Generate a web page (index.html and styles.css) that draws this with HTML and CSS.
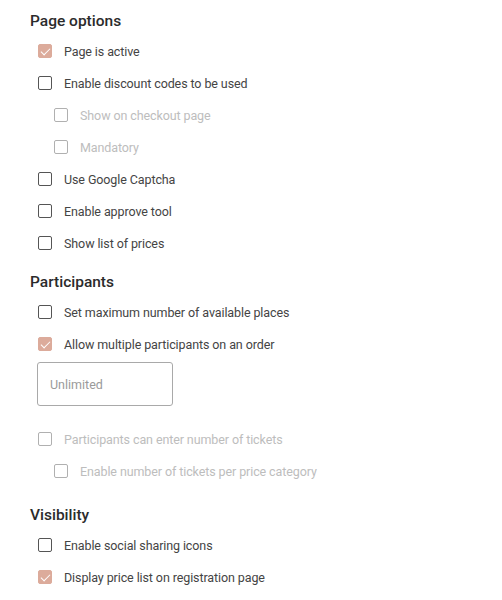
FILE: index.html
```html
<!DOCTYPE html>
<html lang="en">
<head>
<meta charset="utf-8">
<link rel="stylesheet" href="styles.css">
</head>
<body>
<div class="page">
  <section class="group">
    <h2 class="title">Page options</h2>
    <label class="row"><span class="box checked"></span><span class="text">Page is active</span></label>
    <label class="row"><span class="box"></span><span class="text">Enable discount codes to be used</span></label>
    <label class="row sub disabled"><span class="box"></span><span class="text">Show on checkout page</span></label>
    <label class="row sub disabled"><span class="box"></span><span class="text">Mandatory</span></label>
    <label class="row"><span class="box"></span><span class="text">Use Google Captcha</span></label>
    <label class="row"><span class="box"></span><span class="text">Enable approve tool</span></label>
    <label class="row"><span class="box"></span><span class="text">Show list of prices</span></label>
  </section>
  <section class="group">
    <h2 class="title">Participants</h2>
    <label class="row"><span class="box"></span><span class="text">Set maximum number of available places</span></label>
    <label class="row"><span class="box checked"></span><span class="text">Allow multiple participants on an order</span></label>
    <div class="field"><span class="placeholder">Unlimited</span></div>
    <label class="row disabled spaced"><span class="box"></span><span class="text">Participants can enter number of tickets</span></label>
    <label class="row sub disabled"><span class="box"></span><span class="text">Enable number of tickets per price category</span></label>
  </section>
  <section class="group last">
    <h2 class="title">Visibility</h2>
    <label class="row"><span class="box"></span><span class="text">Enable social sharing icons</span></label>
    <label class="row"><span class="box checked"></span><span class="text">Display price list on registration page</span></label>
  </section>
</div>
</body>
</html>
```
FILE: styles.css
```css
* { box-sizing: border-box; }
html, body { margin: 0; padding: 0; background: #ffffff; }
body {
  font-family: Roboto, "Noto Sans", "Liberation Sans", sans-serif;
  color: #444444;
}
.page {
  padding: 11px 0 0 30px;
  display: flex;
  flex-direction: column;
}
.group { display: flex; flex-direction: column; }
.group + .group { margin-top: 13px; }
.group.last { margin-top: 18px; }
.title {
  margin: 0 0 4px 0;
  font-size: 15.5px;
  line-height: 20px;
  font-weight: 500;
  color: #2b2b2b;
}
.row {
  display: flex;
  align-items: center;
  height: 32px;
  padding-left: 8px;
  font-size: 12.5px;
  letter-spacing: -0.1px;
}
.row.sub { padding-left: 24px; }
.row.spaced { margin-top: 17px; }
.box {
  width: 14px;
  height: 14px;
  border: 1px solid #555555;
  border-radius: 2px;
  margin-right: 12px;
  flex: none;
  position: relative;
  background: #fff;
}
.box.checked {
  background: #dcab9b;
  border-color: #dcab9b;
}
.box.checked::after {
  content: "";
  position: absolute;
  left: 4px;
  top: 1px;
  width: 4px;
  height: 8px;
  border-right: 1.5px solid #fff;
  border-bottom: 1.5px solid #fff;
  transform: rotate(45deg);
}
.disabled .box { border-color: #b0b0b0; }
.disabled .text { color: #bdbdbd; }
.field {
  margin: 2px 0 0 7px;
  width: 136px;
  height: 44px;
  border: 1px solid #a9a9a9;
  border-radius: 3px;
  display: flex;
  align-items: center;
  padding-left: 12px;
  font-size: 12.5px;
  color: #9a9a9a;
}
```
